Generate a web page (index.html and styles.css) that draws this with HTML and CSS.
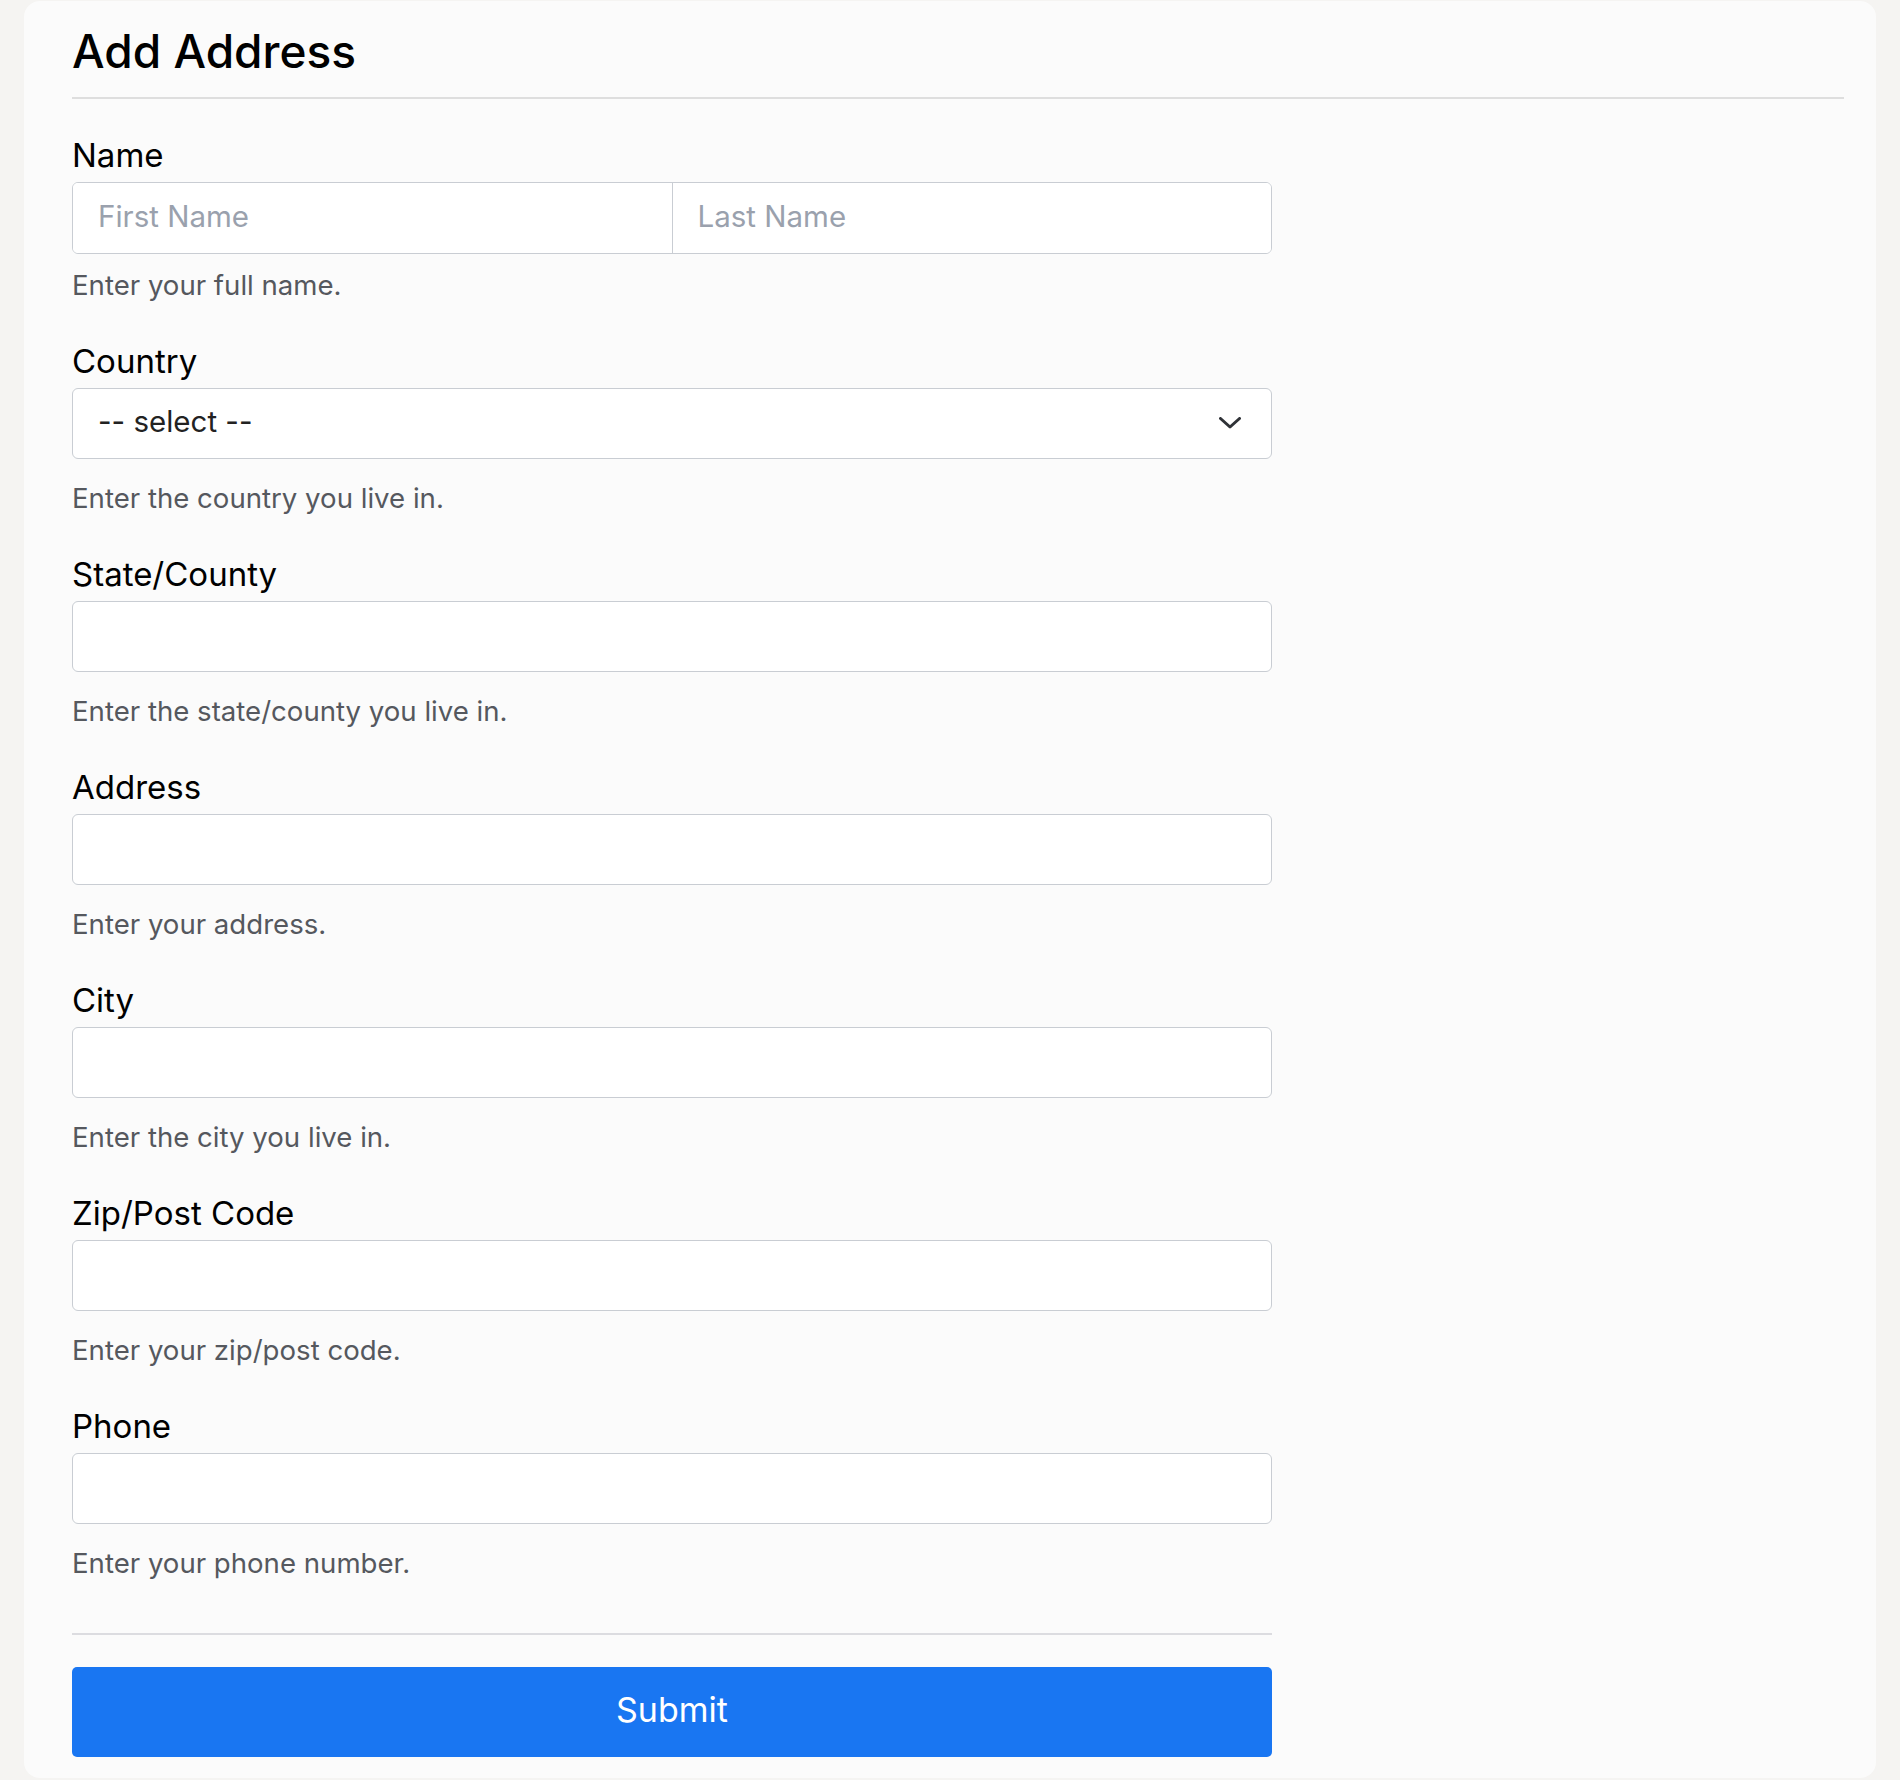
FILE: index.html
```html
<!DOCTYPE html>
<html>

<head>
    <meta charset="utf-8">
    <title>Add Address</title>
    <link rel="stylesheet" href="styles.css">
</head>

<body>
    <div class="card">
        <h1 class="card-title">Add Address</h1>

        <form class="address-form">
            <div class="field field-name">
                <label class="field-label">Name</label>
                <div class="name-group">
                    <input type="text" placeholder="First Name">
                    <input type="text" placeholder="Last Name">
                </div>
                <p class="hint">Enter your full name.</p>
            </div>

            <div class="field">
                <label class="field-label" for="country">Country</label>
                <div class="select-wrap">
                    <select id="country" class="text-input">
                        <option>-- select --</option>
                    </select>
                    <svg class="chevron" width="22" height="12" viewBox="0 0 22 12">
                        <path d="M1.5 1.5 L11 10 L20.5 1.5" fill="none" stroke="#2f3237" stroke-width="3" stroke-linecap="round" stroke-linejoin="round"/>
                    </svg>
                </div>
                <p class="hint">Enter the country you live in.</p>
            </div>

            <div class="field">
                <label class="field-label" for="state">State/County</label>
                <input id="state" class="text-input" type="text">
                <p class="hint">Enter the state/county you live in.</p>
            </div>

            <div class="field">
                <label class="field-label" for="address">Address</label>
                <input id="address" class="text-input" type="text">
                <p class="hint">Enter your address.</p>
            </div>

            <div class="field">
                <label class="field-label" for="city">City</label>
                <input id="city" class="text-input" type="text">
                <p class="hint">Enter the city you live in.</p>
            </div>

            <div class="field">
                <label class="field-label" for="zip">Zip/Post Code</label>
                <input id="zip" class="text-input" type="text">
                <p class="hint">Enter your zip/post code.</p>
            </div>

            <div class="field">
                <label class="field-label" for="phone">Phone</label>
                <input id="phone" class="text-input" type="text">
                <p class="hint">Enter your phone number.</p>
            </div>

            <div class="actions">
                <button type="button" class="submit">Submit</button>
            </div>
        </form>
    </div>
</body>

</html>
```

FILE: styles.css
```css
body {
    margin: 0;
    padding: 1px 24px 2px;
    background: #f5f4f2;
    font-family: Inter, "Noto Sans", sans-serif;
    color: #000;
}

.card {
    background: #fbfbfb;
    border-radius: 16px;
    padding: 20px 32px 21px 48px;
}

.card-title {
    margin: 0;
    padding-bottom: 15px;
    border-bottom: 2px solid #dedede;
    font-size: 46px;
    line-height: 61px;
    font-weight: 500;
}

.address-form {
    max-width: 1200px;
    margin-top: 36px;
}

.field {
    margin-top: 38px;
}

.field:first-child {
    margin-top: 0;
}

.field-name + .field {
    margin-top: 38px;
}

.field-label {
    display: block;
    margin-bottom: 7px;
    font-size: 33px;
    line-height: 40px;
}

.text-input,
.name-group {
    display: block;
    width: 100%;
    height: 71px;
    box-sizing: border-box;
    border: 1px solid #c9cdd3;
    border-radius: 6px;
    background: #fff;
}

.text-input {
    padding: 0 25px 5px;
    font-family: inherit;
    font-size: 29.5px;
    color: #222;
}

.name-group {
    display: flex;
    height: 72px;
    overflow: hidden;
}

.name-group input {
    flex: 1;
    min-width: 0;
    border: 0;
    padding: 0 25px 5px;
    font-family: inherit;
    font-size: 29.5px;
    background: #fff;
}

.name-group input + input {
    border-left: 1px solid #c9cdd3;
}

::placeholder {
    color: #9aa1ad;
}

.select-wrap {
    position: relative;
}

.select-wrap select {
    appearance: none;
    -webkit-appearance: none;
}

.chevron {
    position: absolute;
    right: 31px;
    top: 29px;
    pointer-events: none;
}

.hint {
    margin: 21px 0 0;
    font-size: 27.6px;
    line-height: 36px;
    color: #55585e;
}

.field-name .hint {
    margin-top: 13px;
}

.actions {
    margin-top: 52px;
    padding-top: 32px;
    border-top: 2px solid #dcdce0;
}

.submit {
    display: block;
    width: 100%;
    height: 90px;
    padding: 0 0 5px;
    border: 0;
    border-radius: 5px;
    background: #1976f2;
    color: #fff;
    font-family: inherit;
    font-size: 34px;
}
```
